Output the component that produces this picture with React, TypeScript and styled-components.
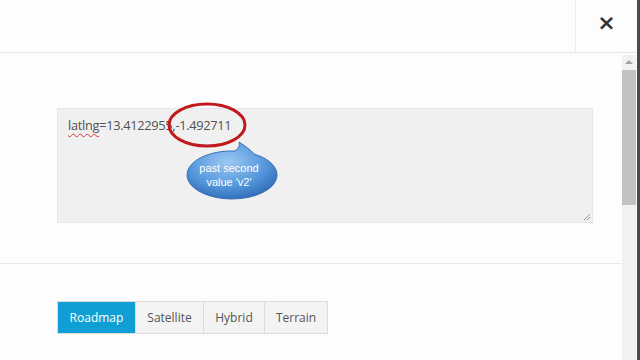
import React from "react";
import { createGlobalStyle, styled } from "styled-components";

const GlobalStyle = createGlobalStyle`
  html, body {
    margin: 0;
    padding: 0;
    background: #fefdfe;
    font-family: "Open Sans", "Liberation Sans", sans-serif;
    overflow: hidden;
  }
`;

const Frame = styled.div`
  width: 640px;
  height: 360px;
  display: flex;
  flex-direction: row;
  overflow: hidden;
`;

const Window = styled.div`
  flex: 1;
  display: flex;
  flex-direction: column;
`;

const Header = styled.div`
  height: 52px;
  display: flex;
  flex-direction: row;
  justify-content: flex-end;
  border-bottom: 1px solid #e4e4e4;
  flex-shrink: 0;
`;

const CloseButton = styled.button`
  width: 62px;
  border: none;
  border-left: 1px solid #ececec;
  background: transparent;
  color: #333;
  font-family: "DejaVu Sans", sans-serif;
  font-size: 22px;
  font-weight: bold;
  padding: 0 0 8px 0;
  cursor: pointer;
`;

const Body = styled.div`
  flex: 1;
  display: flex;
  flex-direction: row;
  min-height: 0;
  padding-top: 2px;
`;

const Content = styled.div`
  flex: 1;
  display: flex;
  flex-direction: column;
`;

const Section = styled.div<{ $top: number; $bottom: number; $divider?: boolean }>`
  padding: ${(p) => p.$top}px 29px ${(p) => p.$bottom}px 57px;
  border-bottom: ${(p) => (p.$divider ? "1px solid #e8e8e8" : "none")};
`;

const AreaWrap = styled.div`
  position: relative;
  width: 536px;
  height: 115px;
`;

const TextArea = styled.div`
  box-sizing: border-box;
  width: 100%;
  height: 100%;
  background: #f0f0f0;
  border: 1px solid #e6e6e6;
  padding: 7px 10px;
  font-size: 12.8px;
  color: #505050;
  letter-spacing: -0.3px;
`;

const Squiggle = styled.span`
  text-decoration: underline wavy #d33;
  text-decoration-thickness: 1px;
  text-underline-offset: 3px;
`;

const Grip = styled.svg`
  position: absolute;
  right: 2px;
  bottom: 2px;
`;

const Annotation = styled.svg`
  position: absolute;
  left: 0;
  top: 0;
  overflow: visible;
  pointer-events: none;
`;

const Group = styled.div`
  display: inline-flex;
  flex-direction: row;
  border: 1px solid #dcdcdc;
`;

const Tab = styled.button<{ $active?: boolean; $w: number }>`
  width: ${(p) => p.$w}px;
  height: 31px;
  border: none;
  border-left: 1px solid ${(p) => (p.$active ? "#109fd5" : "#dcdcdc")};
  &:first-child {
    border-left: none;
  }
  background: ${(p) => (p.$active ? "#109fd5" : "#f3f3f3")};
  color: ${(p) => (p.$active ? "#fff" : "#555")};
  font-family: "Open Sans", "Liberation Sans", sans-serif;
  font-size: 12px;
  padding: 0;
  cursor: pointer;
`;

const Scrollbar = styled.div`
  width: 14px;
  margin-right: 1px;
  background: #f1f1f1;
  display: flex;
  flex-direction: column;
  align-items: center;
`;

const Arrow = styled.div`
  margin-top: 5px;
  width: 0;
  height: 0;
  border-left: 4px solid transparent;
  border-right: 4px solid transparent;
  border-bottom: 4px solid #a3a3a3;
`;

const Thumb = styled.div`
  margin-top: 6px;
  width: 100%;
  height: 135px;
  background: #c1c1c1;
`;

const Edge = styled.div`
  width: 3px;
  background: #4a4a4a;
`;

const tabs = [
  { label: "Roadmap", w: 77 },
  { label: "Satellite", w: 68 },
  { label: "Hybrid", w: 61 },
  { label: "Terrain", w: 63 },
];

export default function App() {
  const [active, setActive] = React.useState("Roadmap");
  return (
    <>
      <GlobalStyle />
      <Frame>
        <Window>
          <Header>
            <CloseButton>×</CloseButton>
          </Header>
          <Body>
            <Content>
              <Section $top={53} $bottom={40} $divider>
                <AreaWrap>
                  <TextArea>
                    <Squiggle>latlng</Squiggle>=13.4122955,-1.492711
                  </TextArea>
                  <Grip width="8" height="8" viewBox="0 0 8 8">
                    <path d="M1 7 L7 1 M4 7 L7 4" stroke="#999" strokeWidth="1" />
                  </Grip>
                  <Annotation width="536" height="115">
                    <defs>
                      <radialGradient id="bub" cx="45%" cy="35%" r="70%">
                        <stop offset="0%" stopColor="#9cc8f2" />
                        <stop offset="60%" stopColor="#5598dc" />
                        <stop offset="100%" stopColor="#2d68b4" />
                      </radialGradient>
                    </defs>
                    <ellipse cx="150" cy="17" rx="38" ry="21" fill="none" stroke="#c01a1e" strokeWidth="3" />
                    <path
                      d="M178 43 C 182 40, 183 37, 182 34 C 188 38, 194 42, 197 46 A 45 24 0 1 1 178 43 Z"
                      fill="url(#bub)"
                      stroke="#3a6fb8"
                      strokeWidth="1"
                    />
                    <text x="172" y="64" fill="#fff" fontSize="11" textAnchor="middle" fontFamily="Liberation Sans, sans-serif">
                      past second
                    </text>
                    <text x="172" y="78" fill="#fff" fontSize="11" textAnchor="middle" fontFamily="Liberation Sans, sans-serif">
                      value 'v2'
                    </text>
                  </Annotation>
                </AreaWrap>
              </Section>
              <Section $top={37} $bottom={0}>
                <Group>
                  {tabs.map((t) => (
                    <Tab key={t.label} $w={t.w} $active={active === t.label} onClick={() => setActive(t.label)}>
                      {t.label}
                    </Tab>
                  ))}
                </Group>
              </Section>
            </Content>
            <Scrollbar>
              <Arrow />
              <Thumb />
            </Scrollbar>
          </Body>
        </Window>
        <Edge />
      </Frame>
    </>
  );
}
